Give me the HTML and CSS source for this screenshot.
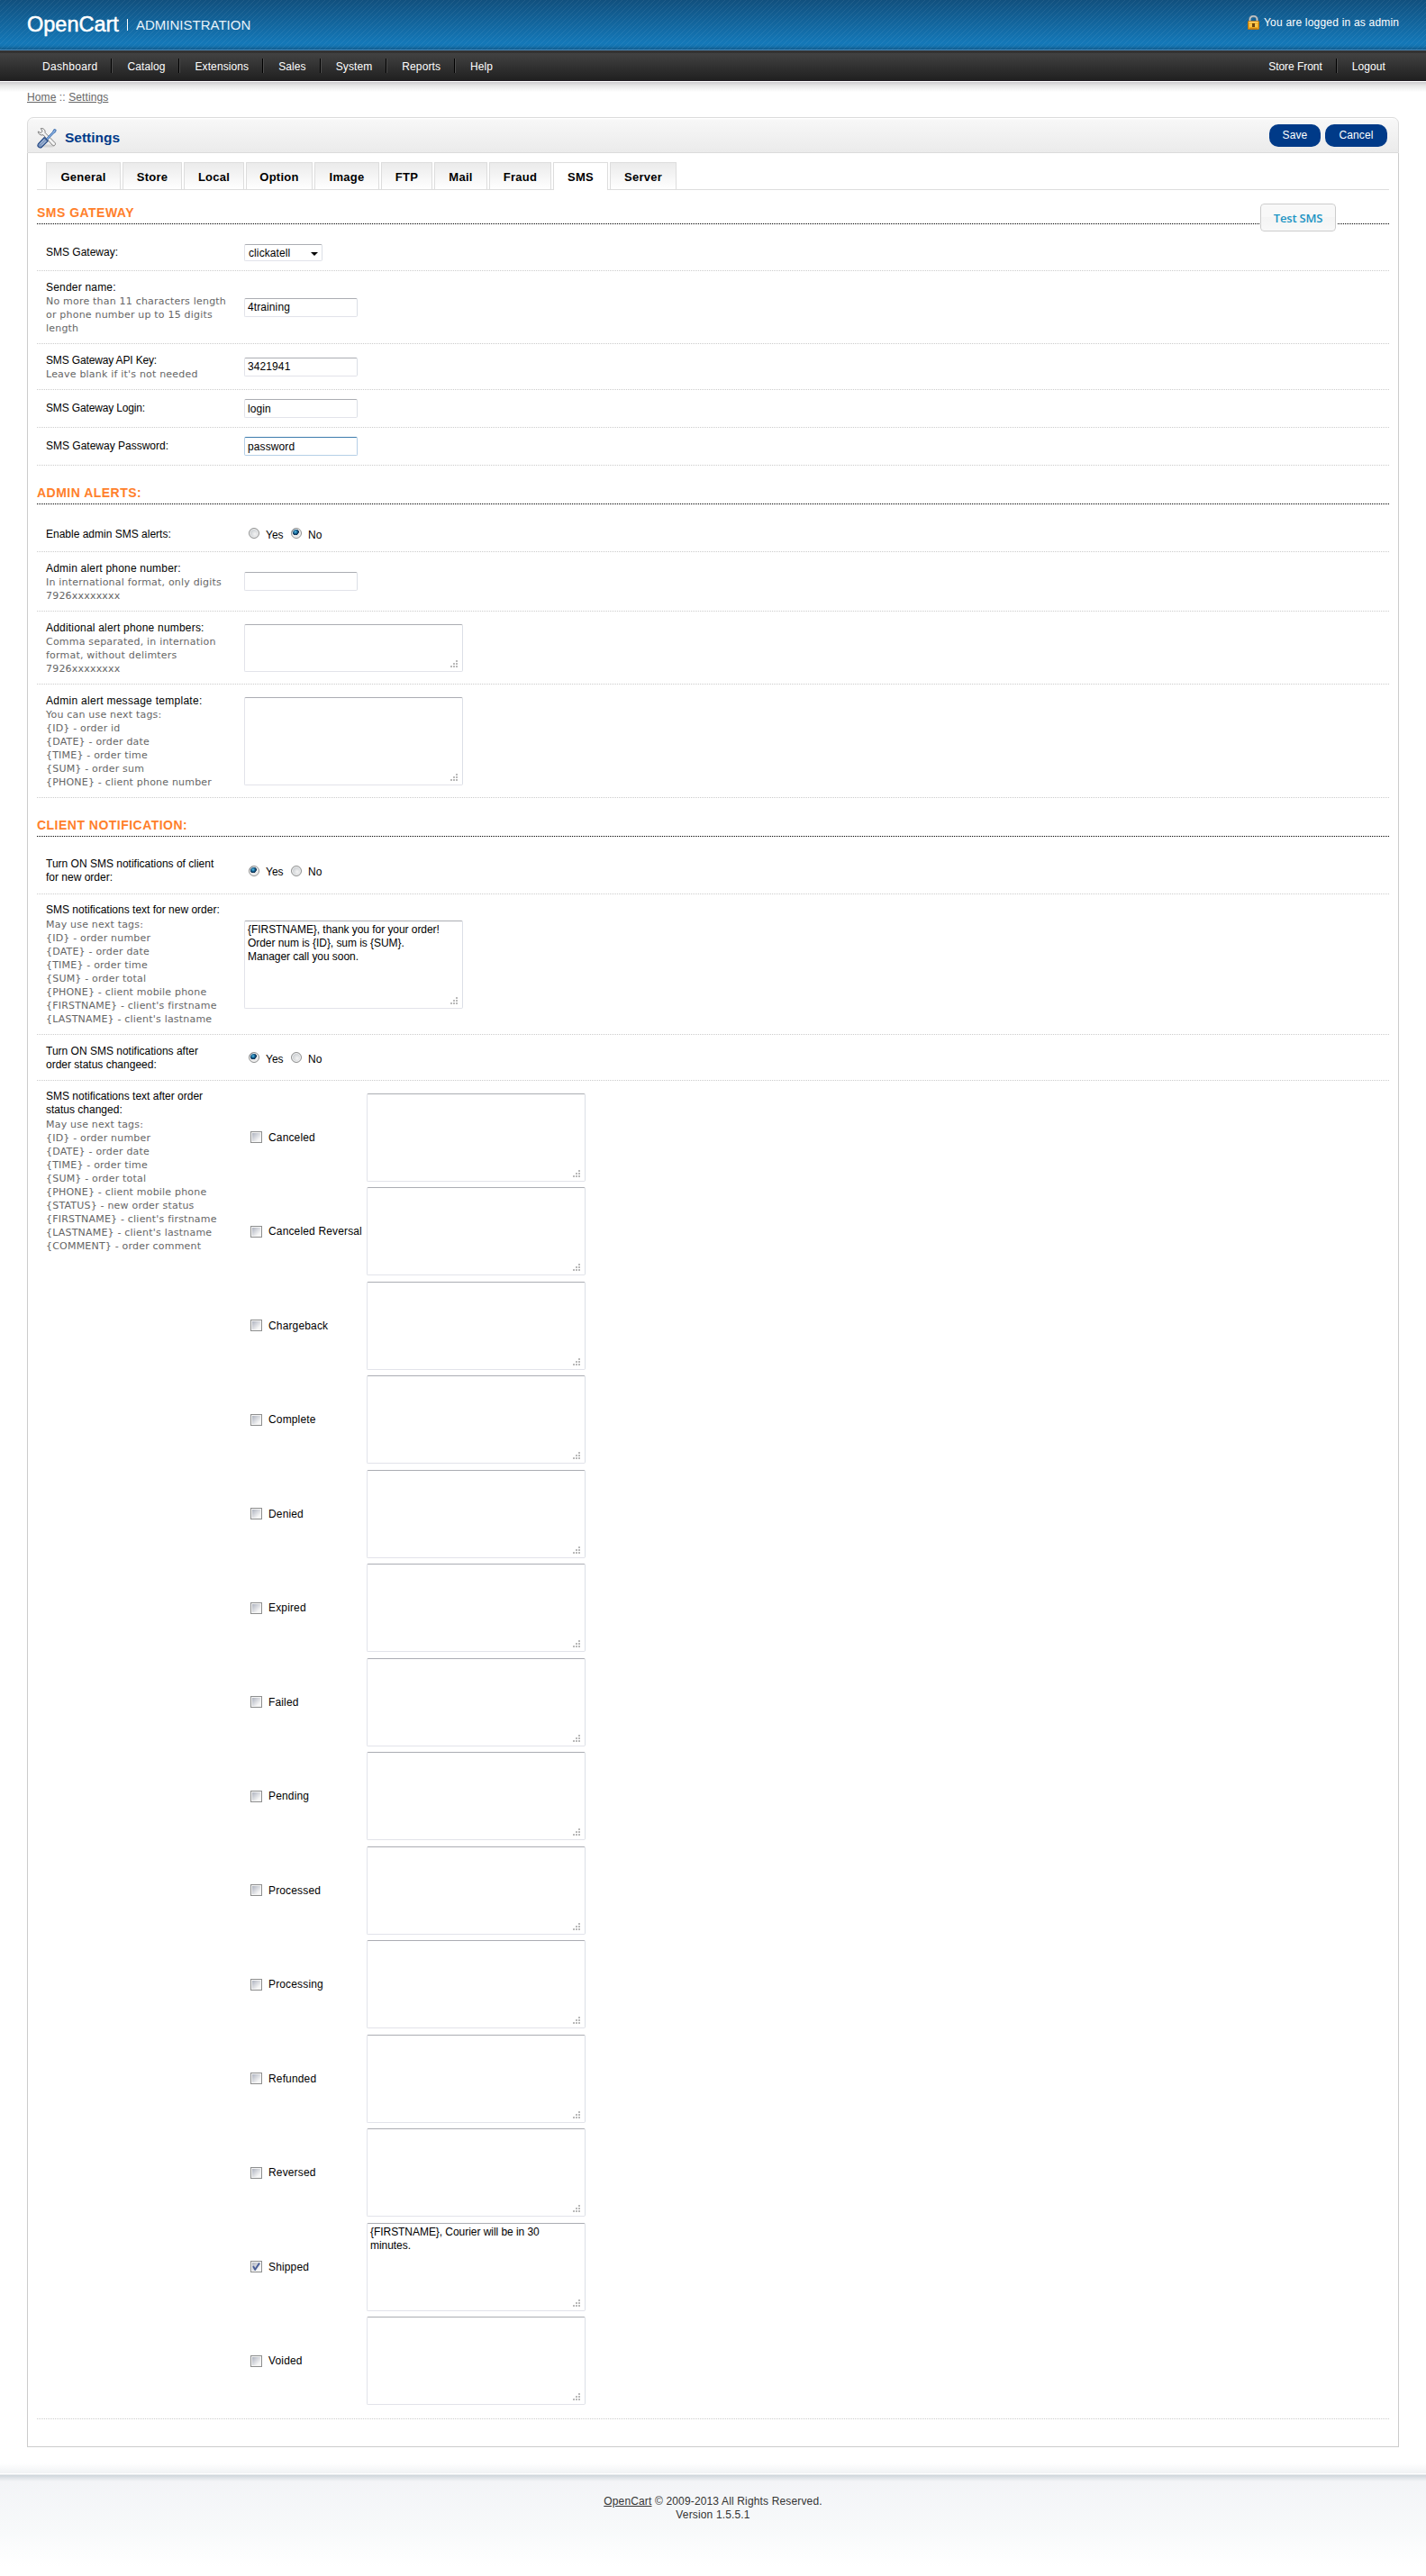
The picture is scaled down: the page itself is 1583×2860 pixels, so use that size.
FILE: index.html
```html
<!DOCTYPE html>
<html lang="en">
<head>
<meta charset="utf-8">
<title>Settings</title>
<link rel="stylesheet" href="styles.css">
</head>
<body>
<header class="header">
  <div class="logo"><span class="logo-name">OpenCart</span><span class="logo-bar"></span><span class="logo-sub">ADMINISTRATION</span></div>
  <div class="login">
    <svg class="lock" width="13" height="16" viewBox="0 0 13 16"><path d="M2.5 8V4.5a4 3.6 0 0 1 8 0V8" fill="none" stroke="#7f8d96" stroke-width="2.6"/><path d="M2.5 8V4.5a4 3.6 0 0 1 8 0V8" fill="none" stroke="#c9ced2" stroke-width="1.2"/><rect x=".5" y="6.5" width="12" height="9" rx=".6" fill="#eda91e" stroke="#b87410"/><path d="M1.5 7.5h10" stroke="#ffe28a"/><path d="M2 10h3M2 12h3M8 10h3M8 12h3" stroke="#ffe07a"/><path d="M2 14.5h9" stroke="#cf8712"/><rect x="5" y="9" width="3" height="4" fill="#6b4310"/></svg>
    <span>You are logged in as admin</span>
  </div>
</header>
<nav class="menu">
  <ul class="menu-left"><li>Dashboard</li><li>Catalog</li><li>Extensions</li><li>Sales</li><li>System</li><li>Reports</li><li>Help</li></ul>
  <ul class="menu-right"><li>Store Front</li><li>Logout</li></ul>
</nav>
<main class="content">
  <div class="breadcrumb"><a>Home</a> :: <a>Settings</a></div>
  <section class="box">
    <div class="heading">
      <svg class="tools" width="22" height="24" viewBox="0 0 22 24"><ellipse cx="12" cy="21" rx="8" ry="1.6" fill="#c9c9c9" opacity=".7"/><path d="M4.3 1.6C6.700 .9 9.700 3 9 6.300L20 17.500c1.600 1.900-.9 4.300-2.800 2.600L7 8.700C4.300 9.800 1.300 7.800 1.300 5l2.900 1.600 1.900-1.800z" fill="#f4f4f4" stroke="#7d7d7d"/><path d="M19 2.500l2.200.6-.6 2.600-2 1.200-8 8.500-1.300-1.300 8-8.500z" fill="#86aee0" stroke="#3e6dab" stroke-width=".9"/><path d="M8.200 11.600l4 4-6.700 6.600c-2.700 2.200-5.900-.9-3.900-3.700z" fill="#7994bd" stroke="#1f4480" stroke-width="1.100"/><path d="M3.500 18.800l5-5M5 20.500l5-5" stroke="#c4d2e8" stroke-width=".9"/></svg>
      <h1>Settings</h1>
      <div class="buttons"><a class="button save">Save</a><a class="button cancel">Cancel</a></div>
    </div>
    <div class="panel">
      <div class="tabs"><a>General</a><a>Store</a><a>Local</a><a>Option</a><a>Image</a><a>FTP</a><a>Mail</a><a>Fraud</a><a class="selected">SMS</a><a>Server</a></div>

      <h2 class="first">SMS GATEWAY<a class="test">Test SMS</a></h2>
      <div class="form">
        <div class="row r40"><div class="label">SMS Gateway:</div><div class="field"><span class="select">clickatell<i></i></span></div></div>
        <div class="row r81"><div class="label">Sender name:<p>No more than 11 characters length<br>or phone number up to 15 digits<br>length</p></div><div class="field"><input type="text" value="4training"></div></div>
        <div class="row r51"><div class="label tight">SMS Gateway API Key:<p>Leave blank if it's not needed</p></div><div class="field"><input type="text" value="3421941"></div></div>
        <div class="row r42"><div class="label tight">SMS Gateway Login:</div><div class="field"><input type="text" value="login"></div></div>
        <div class="row r42"><div class="label">SMS Gateway Password:</div><div class="field"><input type="text" class="active" value="password"></div></div>
      </div>

      <h2>ADMIN ALERTS:</h2>
      <div class="form">
        <div class="row r41"><div class="label">Enable admin SMS alerts:</div><div class="field radios"><i class="radio"></i><span>Yes</span><i class="radio on"></i><span>No</span></div></div>
        <div class="row r66"><div class="label">Admin alert phone number:<p>In international format, only digits<br>7926xxxxxxxx</p></div><div class="field"><input type="text"></div></div>
        <div class="row r81"><div class="label">Additional alert phone numbers:<p>Comma separated, in internation<br>format, without delimters<br>7926xxxxxxxx</p></div><div class="field"><textarea class="short"></textarea></div></div>
        <div class="row r126"><div class="label">Admin alert message template:<p>You can use next tags:<br>{ID} - order id<br>{DATE} - order date<br>{TIME} - order time<br>{SUM} - order sum<br>{PHONE} - client phone number</p></div><div class="field"><textarea></textarea></div></div>
      </div>

      <h2>CLIENT NOTIFICATION:</h2>
      <div class="form">
        <div class="row r52"><div class="label">Turn ON SMS notifications of client<br>for new order:</div><div class="field radios"><i class="radio on"></i><span>Yes</span><i class="radio"></i><span>No</span></div></div>
        <div class="row r156"><div class="label">SMS notifications text for new order:<p>May use next tags:<br>{ID} - order number<br>{DATE} - order date<br>{TIME} - order time<br>{SUM} - order total<br>{PHONE} - client mobile phone<br>{FIRSTNAME} - client's firstname<br>{LASTNAME} - client's lastname</p></div><div class="field"><textarea>{FIRSTNAME}, thank you for your order!
Order num is {ID}, sum is {SUM}.
Manager call you soon.</textarea></div></div>
        <div class="row r51"><div class="label">Turn ON SMS notifications after<br>order status changeed:</div><div class="field radios"><i class="radio on"></i><span>Yes</span><i class="radio"></i><span>No</span></div></div>
        <div class="row tall"><div class="label">SMS notifications text after order<br>status changed:<p>May use next tags:<br>{ID} - order number<br>{DATE} - order date<br>{TIME} - order time<br>{SUM} - order total<br>{PHONE} - client mobile phone<br>{STATUS} - new order status<br>{FIRSTNAME} - client's firstname<br>{LASTNAME} - client's lastname<br>{COMMENT} - order comment</p></div>
          <div class="statuses">
            <div class="status"><i class="check"></i><span>Canceled</span><textarea></textarea></div>
            <div class="status"><i class="check"></i><span>Canceled Reversal</span><textarea></textarea></div>
            <div class="status"><i class="check"></i><span>Chargeback</span><textarea></textarea></div>
            <div class="status"><i class="check"></i><span>Complete</span><textarea></textarea></div>
            <div class="status"><i class="check"></i><span>Denied</span><textarea></textarea></div>
            <div class="status"><i class="check"></i><span>Expired</span><textarea></textarea></div>
            <div class="status"><i class="check"></i><span>Failed</span><textarea></textarea></div>
            <div class="status"><i class="check"></i><span>Pending</span><textarea></textarea></div>
            <div class="status"><i class="check"></i><span>Processed</span><textarea></textarea></div>
            <div class="status"><i class="check"></i><span>Processing</span><textarea></textarea></div>
            <div class="status"><i class="check"></i><span>Refunded</span><textarea></textarea></div>
            <div class="status"><i class="check"></i><span>Reversed</span><textarea></textarea></div>
            <div class="status"><i class="check"><svg width="9" height="9" viewBox="0 0 9 9"><path d="M1 4l2.200 3.800L8 .6" fill="none" stroke="#4a5f97" stroke-width="1.900"/></svg></i><span>Shipped</span><textarea>{FIRSTNAME}, Courier will be in 30
minutes.</textarea></div>
            <div class="status"><i class="check"></i><span>Voided</span><textarea></textarea></div>
          </div>
        </div>
      </div>
    </div>
  </section>
</main>
<footer class="footer"><a>OpenCart</a> © 2009-2013 All Rights Reserved.<br>Version 1.5.5.1</footer>
</body>
</html>
```
FILE: styles.css
```css
* { box-sizing: border-box; }
body { margin: 0; background: #fff; color: #000; font: 12px/15px "Liberation Sans", Arial, sans-serif; height: 2860px; display: flex; flex-direction: column; overflow: hidden; }
h1, h2, p, ul { margin: 0; padding: 0; }
i { font-style: normal; }

.header { height: 56px; flex: none; padding: 0 30px; display: flex; justify-content: space-between; align-items: flex-start; color: #fff; border-bottom: 1px solid #4b8abb;
  background: repeating-linear-gradient(135deg, rgba(255,255,255,.07) 0 1px, transparent 1px 4.243px), linear-gradient(#11507e 0, #1478b8 48px, #1474b1 51px, #105a8c 55px); }
.logo { display: flex; align-items: center; height: 54px; }
.logo-name { font-size: 23.5px; -webkit-text-stroke: .5px #fff; width: 102px; white-space: nowrap; }
.logo-bar { width: 1px; height: 13px; background: #fff; margin: 0 9px; }
.logo-sub { font-size: 15px; color: #e8f3fa; }
.login { display: flex; align-items: center; gap: 5px; padding-top: 18px; font-size: 12px; letter-spacing: .2px; }
.login span { white-space: nowrap; width: 150px; }
.lock { margin-top: -1px; }

.menu { height: 34px; flex: none; display: flex; justify-content: space-between; padding: 9px 30px 0; color: #fff; border-bottom: 1px solid #241f26;
  background: linear-gradient(#333 0 3px, #424242 3px, #202020 33px); }
.menu ul { display: flex; list-style: none; padding: 0 0 0 2px; }
.menu li { height: 16px; padding: 2px 15px 0; line-height: 15px; white-space: nowrap; letter-spacing: .1px; }
.menu li + li { border-left: 1px solid #000; box-shadow: inset 1px 0 #4c4c4c; padding-left: 17px; }
.menu-left li:first-child { letter-spacing: .3px; }
.menu .menu-right { padding: 0; }
.menu-right li:first-child { letter-spacing: -.05px; }

.content { flex: none; padding: 1px 30px 0; background: linear-gradient(#fff 1px, #cdcbce 1px, #e6e6e6 5px, #fff 12px); }
.breadcrumb { color: #666; padding-top: 10px; height: 39px; letter-spacing: .1px; }
.breadcrumb a { text-decoration: underline; }

.heading { height: 40px; border: 1px solid #dbdbdb; border-radius: 7px 7px 0 0; padding: 0 12px 0 10px; display: flex; align-items: center; background: linear-gradient(#fff 1px, #f7f7f7 2px, #ebebeb); }
.tools { margin-top: 5px; }
.heading h1 { font-size: 15.5px; color: #003a88; margin: 4px 0 0 9px; flex: 1; }
.buttons { display: flex; gap: 5px; padding-top: 1px; }
.button { height: 25px; border-radius: 10px; background: #003a88; color: #fff; text-align: center; line-height: 25px; letter-spacing: .1px; }
.save { width: 57px; }
.cancel { width: 69px; }

.panel { border: 1px solid #ccc; border-top: 0; height: 2547px; padding: 10px 10px 0; }
.tabs { display: grid; grid-template-columns: 83px 66px 67px 74px 72px 57px 59px 69px 61px 74px; gap: 2px; height: 31px; padding-left: 10px; border-bottom: 1px solid #ddd; }
.tabs a { height: 30px; border: 1px solid #ddd; border-bottom: 0; background: linear-gradient(#ebebeb, #fff); font: bold 13px/32px "Liberation Sans", Arial, sans-serif; letter-spacing: .25px; text-align: center; }
.tabs a.selected { background: #fff; height: 31px; }

h2 { color: #ff802b; font-size: 14px; line-height: 17px; height: 43px; padding-top: 22px; background: repeating-linear-gradient(90deg, #000 0 1px, transparent 1px 2px) left bottom / 100% 1px no-repeat; position: relative; letter-spacing: .48px; margin-bottom: 12px; }
h2.first { height: 38px; padding-top: 17px; }
.test { position: absolute; right: 59px; top: 15px; width: 84px; height: 31px; border: 1px solid #ccc; border-radius: 4px; outline: 1px solid #fff; background: linear-gradient(#f8f8f8 50%, #f4f4f4 50%, #f8f8f8); color: #1c94c4; font: 600 13px/31px "Open Sans", sans-serif; letter-spacing: -.2px; text-align: center; }

.row { display: flex; align-items: center; border-bottom: 1px dotted #ccc; padding-left: 10px; }
.label { width: 220px; flex: none; white-space: nowrap; }
.label p { font: 11px/15px "DejaVu Sans", Verdana, sans-serif; color: #666; letter-spacing: .2px; }
.r40 { height: 40px; } .r41 { height: 41px; } .r42 { height: 42px; } .r51 { height: 51px; } .r52 { height: 52px; }
.r66 { height: 66px; } .r81 { height: 81px; } .r126 { height: 126px; } .r156 { height: 156px; }
.r41 .label, .r51 .label, .r66 .label, .r81 .label, .r126 .label { padding-top: 2px; }
.r66 .label, .r81 .label { letter-spacing: .2px; }
.r126 .label { letter-spacing: .28px; }
.label.tight { letter-spacing: -.15px; }
.r156 .label { padding-top: 1px; }
.r156 p, .tall p { margin-top: 1px; }
.row.tall { height: 1486px; align-items: flex-start; }
.tall .label { padding-top: 10px; }
.field { display: flex; }

input, textarea, .select { display: block; margin: 0; border: 1px solid #e2e3ea; border-top-color: #abadb3; border-left-color: #e2e3ea; border-right-color: #dbdfe6; border-radius: 2px; background: #fff; color: #000; font: 12px/15px "Liberation Sans", Arial, sans-serif; outline: 0; letter-spacing: .1px; }
input { width: 126px; height: 21px; padding: 0 3px; }
input.active { border-color: #b5cfe7; border-top-color: #3d7bad; }
.select { width: 87px; height: 19px; padding: 1px 5px 2px 4px; display: flex; justify-content: space-between; line-height: 16px; }
.select i { border: 4px solid transparent; border-top-color: #000; border-bottom: 0; width: 7px; height: 4px; margin-top: 7px; margin-right: -1px; }
textarea { width: 243px; height: 98px; padding: 2px 3px; resize: none; overflow: hidden; flex: none; letter-spacing: -.05px;
  background: linear-gradient(#b9b9b9,#b9b9b9) right 5px bottom 10px / 2px 2px no-repeat,
    linear-gradient(#b9b9b9,#b9b9b9) right 5px bottom 7px / 2px 2px no-repeat,
    linear-gradient(#b9b9b9,#b9b9b9) right 8px bottom 7px / 2px 2px no-repeat,
    linear-gradient(#b9b9b9,#b9b9b9) right 5px bottom 4px / 2px 2px no-repeat,
    linear-gradient(#b9b9b9,#b9b9b9) right 8px bottom 4px / 2px 2px no-repeat,
    linear-gradient(#b9b9b9,#b9b9b9) right 11px bottom 4px / 2px 2px no-repeat, #fff; }
textarea.short { height: 53px; }

.radios { align-items: center; padding-left: 5px; }
.radio { width: 12px; height: 12px; border: 1px solid #8e8f8f; border-radius: 50%; background: radial-gradient(circle at 60% 60%, #f4f4f4, #c4c8cc 75%); box-shadow: inset 0 0 0 1px #f4f4f4; }
.radio.on { background: radial-gradient(circle at 40% 35%, #5cc4ee 0, #12608f 2px, #0e2b4c 3.500px, #e8e8e8 4px); }
.radios span { width: 35px; padding: 4px 0 0 7px; }
.radios span:last-child { width: auto; }

.statuses { padding-top: 13.900px; }
.status { display: flex; align-items: center; height: 98px; margin-bottom: 6.500px; padding-left: 7px; white-space: nowrap; }
.status span { width: 109px; padding-top: 1px; letter-spacing: .15px; }
.check { width: 13px; height: 13px; border: 1px solid #8e8f8f; margin-right: 7px; padding: 1px; background: linear-gradient(135deg, #aeb3bf, #f6f6f6 80%) center / 9px 9px no-repeat, #f4f4f4; }
.check svg { display: block; }

.footer { flex: 1; margin-top: 18px; padding-top: 35px; text-align: center; color: #333; letter-spacing: .15px;
  background: linear-gradient(#fff 0, #f0f2f4 11px, #fff 11px, #fff 12px, #cdd5da 13px, #dfe3e7 16px, #f3f4f7 20px, #f7f9fa 70px, #fff 115px); }
.footer a { text-decoration: underline; }
```
